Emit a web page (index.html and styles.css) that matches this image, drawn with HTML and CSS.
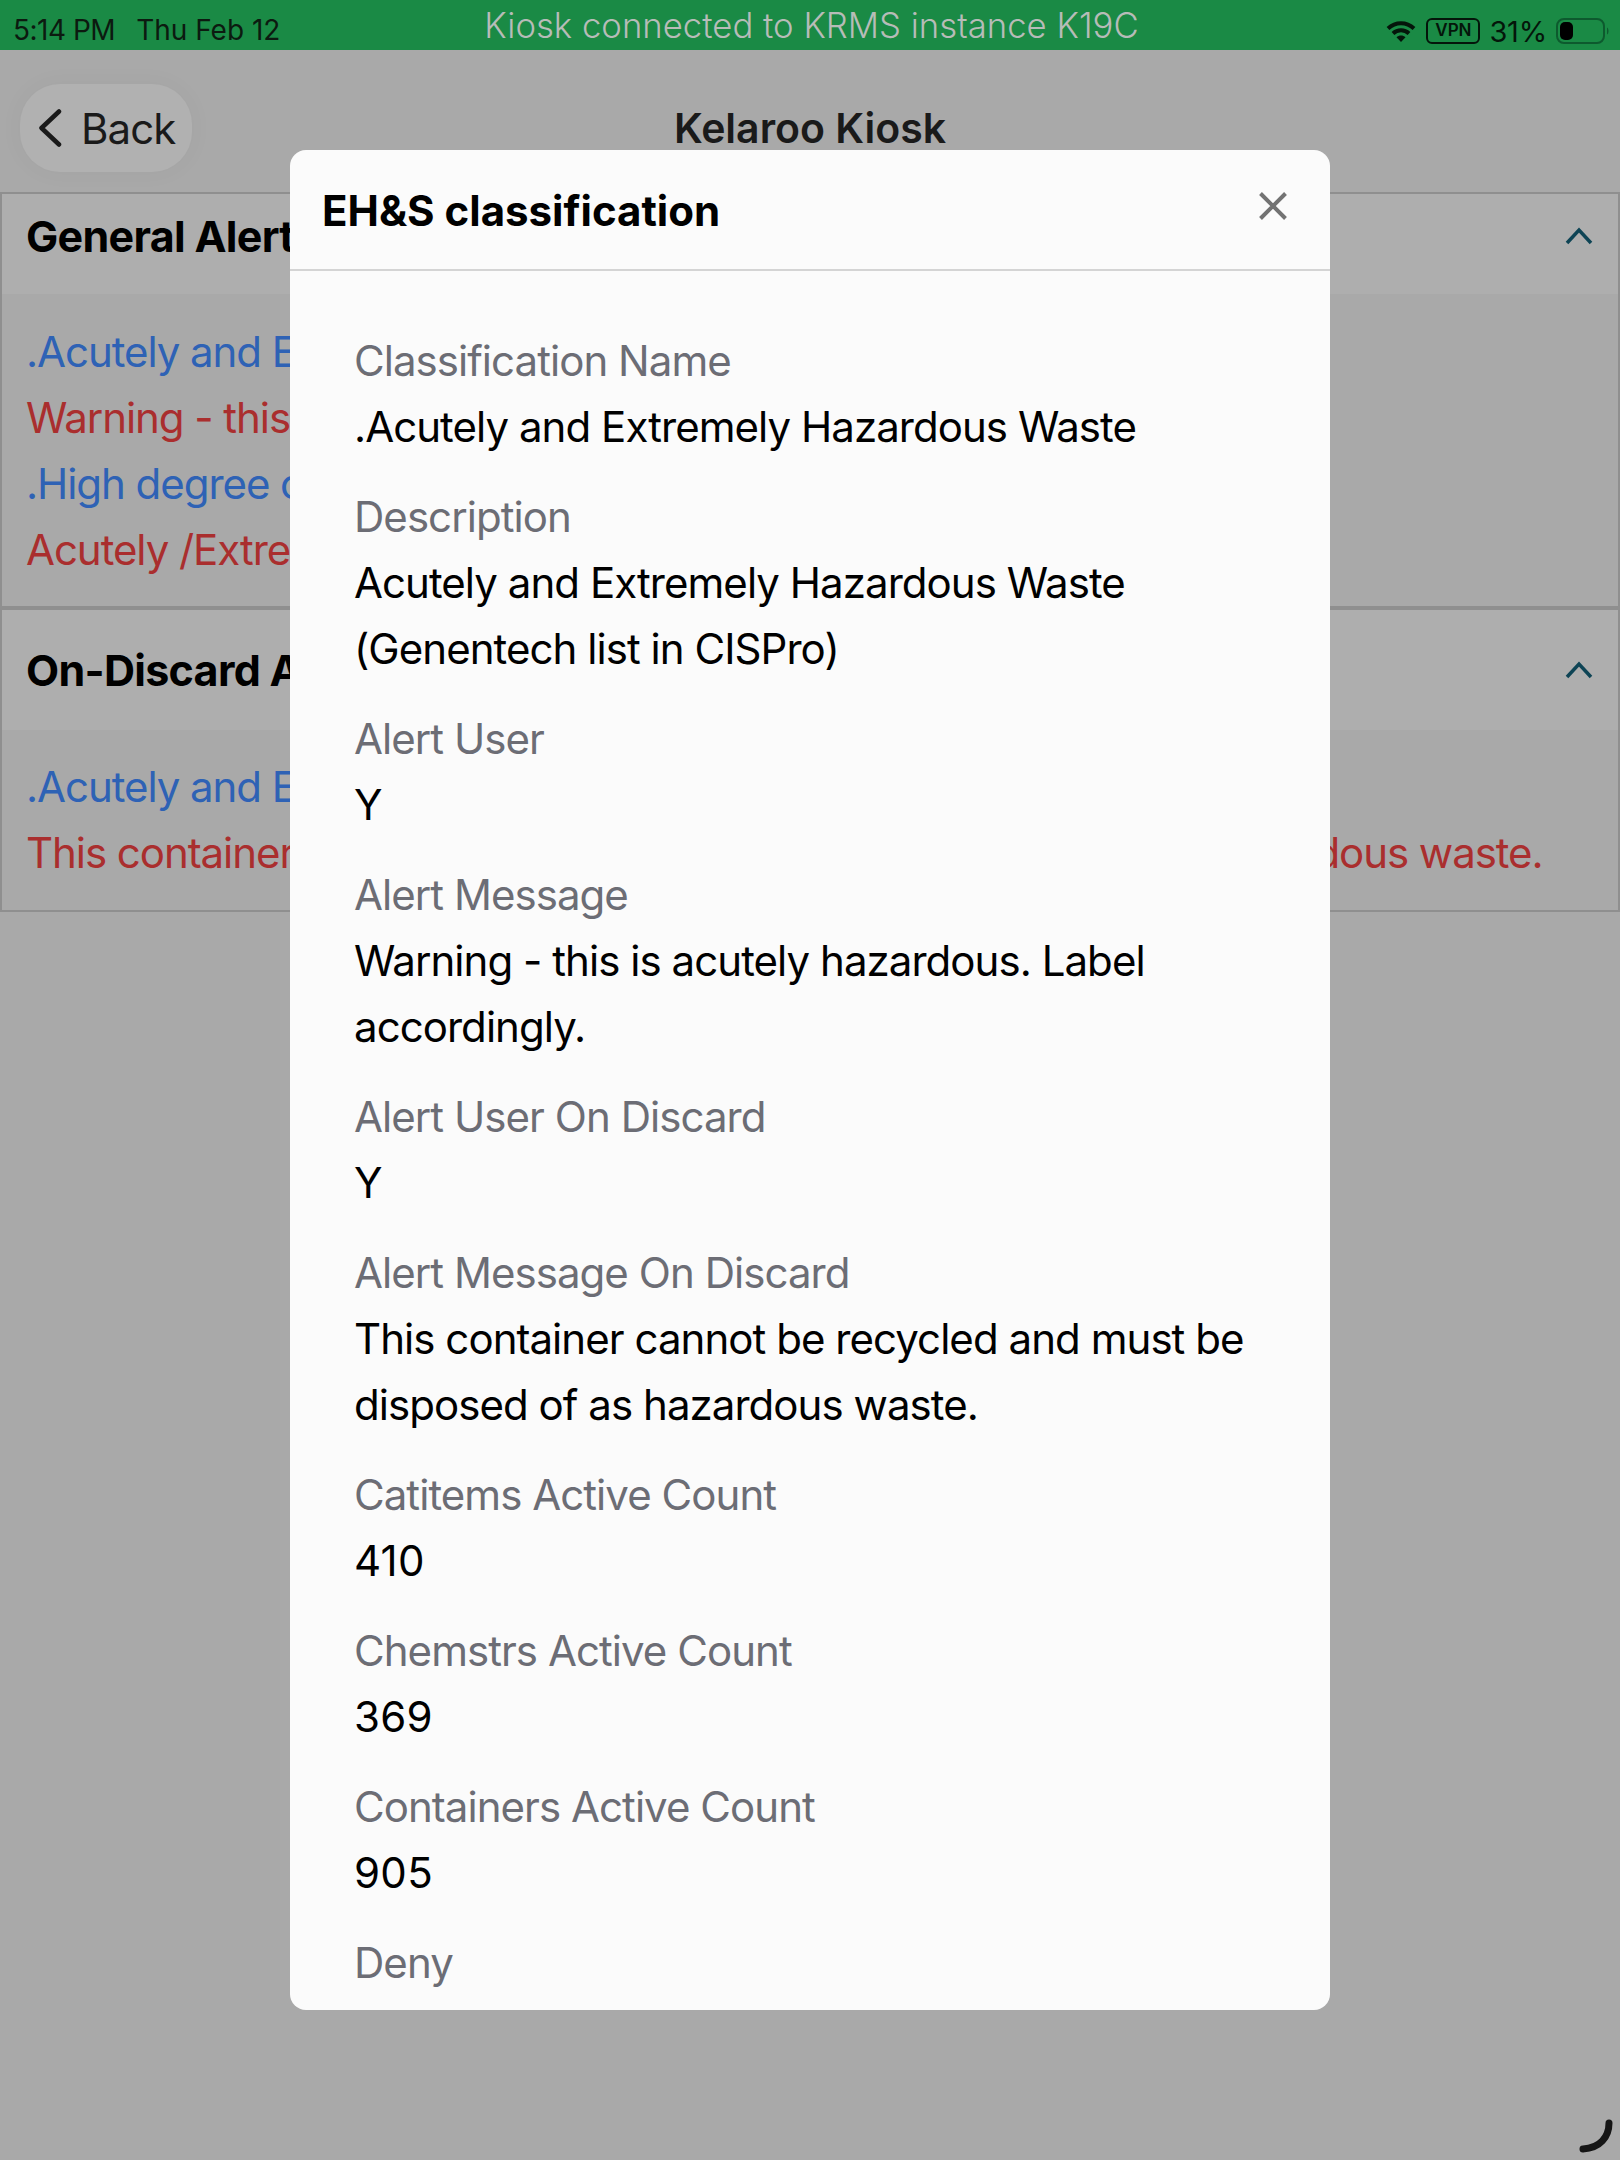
FILE: index.html
```html
<!DOCTYPE html>
<html lang="en">
<head>
<meta charset="utf-8">
<title>Kelaroo Kiosk</title>
<link rel="stylesheet" href="styles.css">
</head>
<body>
<div class="app">
  <header class="statusbar">
    <div class="status-left"><span class="time">5:14 PM</span><span class="date">Thu Feb 12</span></div>
    <div class="kiosk-note">Kiosk connected to KRMS instance K19C</div>
    <div class="status-right">
      <svg class="wifi" width="30" height="21" viewBox="0 0 30 21"><path d="M2 7.500C9.500 0.500 20.500 0.500 28 7.500" class="wifi-arc"/><path d="M7 12.500C11.500 8.300 18.500 8.300 23 12.500" class="wifi-arc"/><path d="M15 21L10.500 16.300C13 14 17 14 19.500 16.300Z" class="wifi-dot"/></svg>
      <span class="vpn">VPN</span>
      <span class="pct">31%</span>
      <svg class="battery" width="54" height="26" viewBox="0 0 54 26"><rect x="1" y="1" width="47" height="24" rx="7" class="batt-shell"/><rect x="4" y="4" width="13" height="18" rx="5" class="batt-fill"/><path d="M51 9.500C53 10.500 53 15.500 51 16.500Z" class="batt-nub"/></svg>
    </div>
  </header>

  <nav class="toolbar">
    <div class="toolbar-left">
      <button class="back">
        <svg width="24" height="38" viewBox="0 0 24 38"><path d="M21 2.500L3.500 19L21 35.500" class="back-chev"/></svg>
        <span>Back</span>
      </button>
    </div>
    <h1 class="title">Kelaroo Kiosk</h1>
    <div></div>
  </nav>

  <section class="panel">
    <div class="panel-head">
      <h2>General Alerts</h2>
      <svg width="28" height="18" viewBox="0 0 28 18"><path d="M2 16L14 3L26 16" class="chev"/></svg>
    </div>
    <div class="panel-body">
      <p class="blue">.Acutely and Extremely Hazardous Waste</p>
      <p class="red">Warning - this is acutely hazardous. Label accordingly.</p>
      <p class="blue">.High degree of acute toxicity</p>
      <p class="red">Acutely /Extremely toxic material.</p>
    </div>
  </section>
  <section class="panel panel-second">
    <div class="panel-head panel-head-tall">
      <h2>On-Discard Alerts</h2>
      <svg width="28" height="18" viewBox="0 0 28 18"><path d="M2 16L14 3L26 16" class="chev"/></svg>
    </div>
    <div class="panel-body panel-body-second">
      <p class="blue">.Acutely and Extremely Hazardous Waste</p>
      <p class="red">This container cannot be recycled and must be disposed of as hazardous waste.</p>
    </div>
  </section>
</div>

<div class="modal">
  <div class="modal-head">
    <h3>EH&amp;S classification</h3>
    <svg class="close" width="28" height="28" viewBox="0 0 28 28"><path d="M1.500 1.500L26.500 26.500M26.500 1.500L1.500 26.500" class="close-x"/></svg>
  </div>
  <div class="modal-body">
    <div class="field"><div class="label">Classification Name</div><div class="value">.Acutely and Extremely Hazardous Waste</div></div>
    <div class="field"><div class="label">Description</div><div class="value">Acutely and Extremely Hazardous Waste (Genentech list in CISPro)</div></div>
    <div class="field"><div class="label">Alert User</div><div class="value">Y</div></div>
    <div class="field"><div class="label">Alert Message</div><div class="value">Warning - this is acutely hazardous. Label accordingly.</div></div>
    <div class="field"><div class="label">Alert User On Discard</div><div class="value">Y</div></div>
    <div class="field"><div class="label">Alert Message On Discard</div><div class="value">This container cannot be recycled and must be disposed of as hazardous waste.</div></div>
    <div class="field"><div class="label">Catitems Active Count</div><div class="value num">410</div></div>
    <div class="field"><div class="label">Chemstrs Active Count</div><div class="value num">369</div></div>
    <div class="field"><div class="label">Containers Active Count</div><div class="value num">905</div></div>
    <div class="field"><div class="label">Deny</div></div>
  </div>
</div>

<svg class="spinner" width="36" height="38" viewBox="0 0 36 38"><path d="M31 5C31 19 22 30 5 31" class="spin-arc"/></svg>
</body>
</html>
```

FILE: styles.css
```css
* { box-sizing: border-box; }
html, body { margin: 0; height: 2160px; overflow: hidden; }
body { background: #a9a9a9; font-family: Inter, "Liberation Sans", sans-serif; position: relative; color: #000; }
h1, h2, h3, p { margin: 0; }

.app { display: flex; flex-direction: column; }

.statusbar {
  height: 50px; background: #1a8a45;
  display: grid; grid-template-columns: 1fr auto 1fr; align-items: center;
  padding: 0 10px 0 13px;
}
.status-left { display: flex; gap: 21px; font-size: 28px; color: #0c1a10; padding-top: 10px; }
.time { letter-spacing: -0.5px; }
.date { letter-spacing: 0; }
.kiosk-note { font-size: 34.700px; color: #b7bcb8; font-weight: 300; line-height: 50px; }
.status-right { display: flex; align-items: center; justify-content: flex-end; padding-top: 12px; gap: 9px; }
.wifi { margin-right: 1px; }
.wifi-arc { fill: none; stroke: #04150a; stroke-width: 4; }
.wifi-dot { fill: #04150a; }
.vpn {
  width: 54px; height: 26px; border: 2.500px solid #04150a; border-radius: 6px;
  font-size: 17px; font-weight: 600; line-height: 21px; text-align: center; color: #04150a;
}
.pct { font-size: 29px; color: #04150a; letter-spacing: -0.2px; }
.batt-shell { fill: none; stroke: #0d5a2e; stroke-width: 2; }
.batt-fill { fill: #000; }
.batt-nub { fill: #0d5a2e; }

.toolbar {
  height: 142px; display: grid; grid-template-columns: 1fr auto 1fr; align-items: center;
  padding: 14px 20px 0; background: #a9a9a9;
}
.toolbar-left { display: flex; }
.back {
  width: 172px; height: 88px; border: 0; border-radius: 40px; background: #b1b1b1;
  display: flex; align-items: center; gap: 19px; padding: 0 0 0 18px;
  font: 400 42px Inter, "Liberation Sans", sans-serif; letter-spacing: -0.9px; color: #1a1a1a;
  box-shadow: 0 0 24px rgba(0,0,0,.04);
}
.back-chev { fill: none; stroke: #1a1a1a; stroke-width: 4.500; stroke-linecap: round; stroke-linejoin: round; }
.title { font-size: 41px; font-weight: 600; color: #1a1a1a; line-height: 50px; }

.panel { border: 2px solid #8f8f8f; border-bottom-width: 0; background: #a9a9a9; }
.panel-second { border-top-width: 4px; border-bottom-width: 2px; }
.panel-head {
  height: 100px; background: #aeaeae; display: flex; align-items: center; justify-content: space-between;
  padding: 0 25px 16px 24px;
}
.panel-head-tall { height: 120px; padding-bottom: 0; }
.panel-head h2 { font-size: 43px; font-weight: 700; line-height: 66px; letter-spacing: -0.7px; }
.panel-head svg { flex: none; }
.chev { fill: none; stroke: #0e4455; stroke-width: 3.500; }
.panel-body { padding: 25px 24px 23px; font-size: 42px; line-height: 66px; letter-spacing: -1.050px; white-space: nowrap; overflow: hidden; }
.panel-body-second { padding: 24px 24px 24px; }
.blue { color: #2e62b5; }
.red { color: #aa2e2e; }

.modal {
  position: absolute; left: 290px; top: 150px; width: 1040px; height: 1860px;
  background: #fbfbfb; border-radius: 16px; overflow: hidden;
  display: flex; flex-direction: column;
}
.modal-head {
  height: 121px; flex: none; display: flex; justify-content: space-between;
  padding: 28px 43px 0 32px; border-bottom: 2px solid #d4d4d4;
}
.modal-head h3 { font-size: 42px; font-weight: 700; line-height: 66px; }
.close { margin-top: 14px; }
.close-x { fill: none; stroke: #737373; stroke-width: 4; }
.modal-body { padding: 57px 65px 0 64px; display: flex; flex-direction: column; gap: 24px; overflow: hidden; font-size: 42px; line-height: 66px; letter-spacing: -0.950px; }
.label { color: #6c6d75; }
.value { color: #000; }
.num { letter-spacing: 0.300px; }

.spinner { position: absolute; left: 1578px; top: 2118px; }
.spin-arc { fill: none; stroke: #151515; stroke-width: 7; stroke-linecap: round; }
```
